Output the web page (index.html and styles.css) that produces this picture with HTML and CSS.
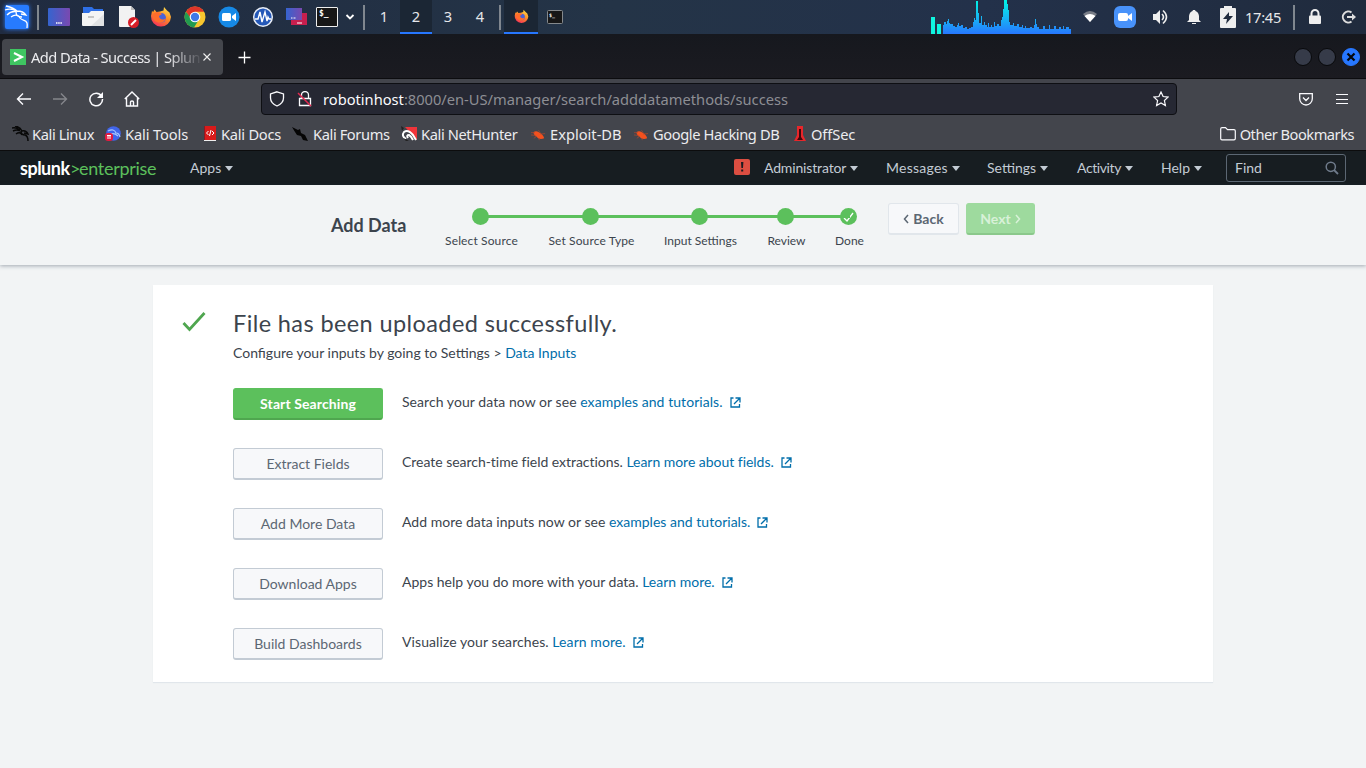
FILE: index.html
```
<!DOCTYPE html>
<html lang="en">
<head>
<meta charset="utf-8">
<title>Add Data - Success | Splunk</title>
<link rel="stylesheet" href="styles.css">
</head>
<body>
<svg class="defs" width="0" height="0">
  <defs>
    <linearGradient id="desk" x1="0" x2="1"><stop offset="0" stop-color="#3564cf"/><stop offset="1" stop-color="#7a49b0"/></linearGradient>
    <linearGradient id="cpu" gradientUnits="userSpaceOnUse" x1="0" y1="0" x2="0" y2="34"><stop offset="0" stop-color="#00f5e4"/><stop offset=".5" stop-color="#16b8f2"/><stop offset="1" stop-color="#2777ff"/></linearGradient>
    <linearGradient id="fire" x1=".8" y1="0" x2=".3" y2="1"><stop offset="0" stop-color="#ffe14a"/><stop offset=".5" stop-color="#ff8a26"/><stop offset="1" stop-color="#f4305a"/></linearGradient>
    <symbol id="firefox" viewBox="0 0 22 22"><path d="M2 5 3.200 6 4.500 3.500 6.500 6 10 5.500 13.500 4.500 14 1 17 4.500 19.500 6.500 21 11A10 10 0 1 1 1 10z" fill="url(#fire)"/><circle cx="11.200" cy="11.800" r="4.800" fill="#4b63d8"/><path d="M3 8c3-3 7-2 9 0l-3 2c0 3 4 5 7 2-1 4-5 6-9 4-3-1-5-4-4-8z" fill="#ff6d2c"/></symbol>
    <symbol id="bug" viewBox="0 0 16 16"><path d="M2.500 5.500C5 3.500 8 4.500 10.500 7c2 1.500 3 3 3.500 5-3 1.500-6 1-8-1.500C4 9.500 3 8 2.500 5.500z" fill="#f4511e"/><path d="m0 8.500 5 .5M3 12l3-2M8 3.500l2 3M10 7.500l5-.5M8 12l1 2M0 6h4" stroke="#a8452f" stroke-width=".8" fill="none"/></symbol>
    <symbol id="ext" viewBox="0 0 11 11"><path d="M3.500 1H1v9h8.500V7M5.500 1H10v4.500M4 7l5.500-5.500" fill="none" stroke="currentColor" stroke-width="1.300"/></symbol>
  </defs>
</svg>

<header class="panel">
  <div class="slot menu"><svg width="34" height="34" viewBox="0 0 34 34"><rect class="glow" x="5" y="5" width="24" height="24" rx="2"/><g fill="none" stroke="#fff" stroke-width="1.300"><path d="M6 6c4 1 8 2 11 5M5 10c5-2 8-1 12 1M7 15c3-3 7-4 10-3M11 17c4-3 8-2 9 1 2 3 6 1 7 5q.5 2 0 5M17 11c4 0 7 1 9 4l-5-1M16 12c0 4 3 5 6 5"/></g></svg></div>
  <i class="sep first"></i>
  <div class="slot"><svg width="22" height="18"><rect width="22" height="18" rx="1" fill="url(#desk)"/><path d="M8 15h6" stroke="#fff" stroke-width="1.300" stroke-dasharray="1.500 .7"/></svg></div>
  <div class="slot"><svg width="22" height="20"><path d="M1 0h9l2 2h9v5H1z" fill="#2e6fe6"/><path d="M0 6h7l2-2h13v14q0 1-1 1H1q-1 0-1-1z" fill="#f4f4f4"/><path d="m9 19 13-12v11q0 1-1 1z" fill="#e1e2e3"/><path d="M6 10h6" stroke="#999"/></svg></div>
  <div class="slot doc"><svg width="20" height="22"><path d="M0 0h12l4 4v16q0 1-1 1H1q-1 0-1-1z" fill="#f2f2f2"/><path d="M12 0v4h4z" fill="#bbb"/><circle cx="14.500" cy="16.500" r="5.500" fill="#d71e28"/><path d="m12 19 5-5" stroke="#fff" stroke-width="2"/></svg></div>
  <div class="slot"><svg width="22" height="22"><use href="#firefox"/></svg></div>
  <div class="slot"><svg width="22" height="22" viewBox="0 0 22 22"><circle cx="11" cy="11" r="10.500" fill="#f8c62e"/><path d="M1.900 5.800a10.500 10.500 0 0 1 18.200 0H11L7 13z" fill="#de3529"/><path d="M1.900 5.800A10.500 10.500 0 0 0 10 21.500l5-8-7 0z" fill="#219b50"/><circle cx="11" cy="11" r="5.300" fill="#fff"/><circle cx="11" cy="11" r="4.200" fill="#3d79e8"/></svg></div>
  <div class="slot"><svg width="22" height="22"><circle cx="11" cy="11" r="10.500" fill="#1689e6"/><rect x="4" y="7" width="9" height="8" rx="1.500" fill="#fff"/><path d="m14 10 4-3v8l-4-3z" fill="#fff"/></svg></div>
  <div class="slot"><svg width="22" height="22"><circle cx="11" cy="11" r="9.300" fill="#2458b8" stroke="#e8edf6" stroke-width="1.500"/><path d="M3 13h3l2-7 2 10 3-10 2 9 1-4 1 2h2" fill="none" stroke="#fff" stroke-width="1.400"/></svg></div>
  <div class="slot"><svg width="22" height="18"><rect x="5" y="5" width="16" height="12" fill="#c81f4e"/><rect width="16" height="12" fill="url(#desk)"/><path d="M5 10h5" stroke="#fff" stroke-dasharray="1 .5"/><path d="M11 15h5" stroke="#fff"/></svg></div>
  <div class="slot term"><svg width="22" height="20"><rect x=".5" y=".5" width="21" height="19" rx=".5" fill="#171717" stroke="#eee"/><text x="3" y="9" class="prompt">$_</text></svg></div>
  <div class="slot chev"><svg width="10" height="6"><path d="m1.500 1 3.500 3.500L8.500 1" fill="none" stroke="#fff" stroke-width="1.800"/></svg></div>
  <i class="sep second"></i>
  <nav class="spaces"><span>1</span><span class="on">2</span><span>3</span><span>4</span></nav>
  <i class="sep third"></i>
  <div class="slot on"><svg width="15" height="15"><use href="#firefox"/></svg></div>
  <div class="slot"><svg width="16" height="14"><rect x=".5" y=".5" width="15" height="13" rx="1" fill="#171717" stroke="#85898c"/><text x="2" y="7" class="prompt small">$_</text></svg></div>
  <svg class="graph" width="140" height="34"><path d="M0 17h4v17H0zM6 24h4v10H6z" fill="#0ff5df"/><path d="M12 34V25h1v-3h2v2h1v-3h1v-2h1v4h1v1h3v2h2v1h2v-2h1v-2h1v3h2v-1h2v3h2v-1h2v2h2v-1h2v-1h2v-5h1v-4h1v2h1V1h2v12h1v10h2v-7h1v9h2v-3h1v3h2v2h1v-4h1v4h2v-2h1v2h2v-5h1v4h2v-2h2v2h2v-6h1v-3h1v-8h1V0h3v4h1v6h1v12h1v3h3v-2h1v3h3v-2h2v3h3v-2h1v3h2v-2h1v2h4v-1h2v1h2v-3h1v-6h1v5h1v3h2v2h4v-3h2v3h4v-4h1v4h4v-3h2v3h3v-2h2v2h2v-3h1v3h2v-2h3v2h2v-4h2v4h1v2h3v-6h1v3h1v-8h2v15z" fill="url(#cpu)"/></svg>
  <div class="tray">
    <svg width="16" height="14"><path d="M1 4q7-6 14 0l-7 8z" fill="#777c86"/><path d="M2.500 6q5.500-4 11 0L8 12z" fill="#fff"/></svg>
    <svg width="22" height="22"><rect width="22" height="22" rx="6" fill="#4892fa"/><rect x="4" y="7" width="10" height="8" rx="2" fill="#fff"/><path d="m14 10 4-3v8l-4-3z" fill="#fff"/></svg>
    <svg width="16" height="16"><path d="M1 5h3l4-4v14l-4-4H1z" fill="#eee"/><path d="M10 5q3 3 0 6M11 1.500q7 6.500 0 13" fill="none" stroke="#eee" stroke-width="1.600"/></svg>
    <svg width="16" height="16"><path d="M7 1h2l.5 1q3 1 3.500 5v4l2 2H1l2-2V7q.5-4 3.500-5zM6 14h4v1H6z" fill="#eee"/></svg>
    <svg width="16" height="22"><path d="M4 0h8v2h3q1 0 1 1v18q0 1-1 1H1q-1 0-1-1V3q0-1 1-1h3z" fill="#eee"/><path d="m9 6-6 7h4l-1 5 7-8H9z" fill="#202b3d"/></svg>
  </div>
  <time class="clock">17:45</time>
  <i class="sep fourth"></i>
  <div class="slot lock"><svg width="14" height="16"><path d="M3.500 7V4.500a3.500 3.500 0 0 1 7 0V7" fill="none" stroke="#eee" stroke-width="2"/><rect x="1" y="6.500" width="12" height="8.500" rx="1" fill="#eee"/></svg></div>
  <div class="slot"><svg width="16" height="16"><path d="M10.500 3.500A5.500 5.500 0 1 0 10.500 12.500M6 8h6" fill="none" stroke="#ddd" stroke-width="2"/><path d="m11 4.500 4 3.500-4 3.500z" fill="#ddd"/></svg></div>
</header>

<section class="tabs">
  <div class="tab">
    <svg class="fav" width="16" height="16"><rect width="16" height="16" fill="#3fc561"/><path d="m4 4 8 4-8 4" fill="none" stroke="#fff" stroke-width="2"/></svg>
    <span class="title">Add Data - Success | Splun</span>
    <svg class="x" width="10" height="10"><path d="m1.500 1.500 7 7m0-7-7 7" stroke="#eee" stroke-width="1.100"/></svg>
  </div>
  <svg class="plus" width="13" height="13"><path d="M6.500.5v12M.5 6.500h12" stroke="#fff" stroke-width="1.300"/></svg>
  <div class="wm"><i></i><i></i><i class="close"><svg width="10" height="10"><path d="m1.500 1.500 7 7m0-7-7 7" stroke="#05080e" stroke-width="2.200"/></svg></i></div>
</section>

<section class="toolbar">
  <div class="navs">
    <svg width="16" height="16"><path d="M15 8H1.500M7 2.500 1.500 8 7 13.500" fill="none" stroke="#fbfbfe" stroke-width="1.400"/></svg>
    <svg width="16" height="16"><path d="M1 8h13.500M9 2.500 14.500 8 9 13.500" fill="none" stroke="#85868b" stroke-width="1.400"/></svg>
    <svg width="16" height="16"><path d="M13.500 5A6.300 6.300 0 1 0 14.500 8" fill="none" stroke="#fbfbfe" stroke-width="1.500"/><path d="M15 1v6H9z" fill="#fbfbfe"/></svg>
    <svg width="16" height="16"><path d="m.8 8 7.200-7 7.200 7M2.500 7v8h11V7M6.500 15v-4q0-1 1.500-1t1.500 1v4" fill="none" stroke="#fbfbfe" stroke-width="1.400"/></svg>
  </div>
  <div class="url">
    <svg class="shield" width="16" height="16"><path d="M8 .8 14.500 3v4q0 5-6.500 8Q1.500 12 1.500 7V3z" fill="none" stroke="#fbfbfe" stroke-width="1.300"/></svg>
    <svg class="nolock" width="16" height="16"><path d="M4.500 7V4a3.500 3.500 0 0 1 7 0v3M2.500 7.500h11v7h-11z" fill="none" stroke="#fbfbfe" stroke-width="1.300"/><path d="m1 2 13 13" stroke="#e22850" stroke-width="1.500"/></svg>
    <span class="addr">robotinhost<em>:8000/en-US/manager/search/adddatamethods/success</em></span>
    <svg width="16" height="16"><path d="m8 1 2.100 4.500 5 .6-3.700 3.400 1 5L8 12l-4.400 2.500 1-5L.9 6.100l5-.6z" fill="none" stroke="#fbfbfe" stroke-width="1.200"/></svg>
  </div>
  <svg class="pocket" width="14" height="13"><path d="M.7.7h12.600v5a6.300 6.300 0 0 1-12.600 0zM4 4.500l3 3 3-3" fill="none" stroke="#fbfbfe" stroke-width="1.300"/></svg>
  <svg class="burger" width="12" height="12"><path d="M0 1.500h12M0 6.500h12M0 10.500h12" stroke="#fbfbfe"/></svg>
</section>

<nav class="bookmarks">
  <a class="k1"><svg class="black" width="17" height="16"><path d="M0 2q4-1 8 2M1 5q4-2 7 0M3 0q5 1 7 5 4-1 6 3l-4-1M9 5q0 4 4 4 3 1 3 6M4 8q4-3 6 1" fill="none" stroke="#080808" stroke-width="1.500"/></svg>Kali Linux</a>
  <a class="k2"><svg width="16" height="16"><circle cx="8.500" cy="7.500" r="7.300" fill="#4165ea"/><path d="M3 5q6-3 8 2 3 0 4 4M5 9q3-3 8 1" fill="none" stroke="#a9c9ff" stroke-width="1.200"/><rect y="7" width="8" height="8" rx="3" fill="#e31b3f"/><path d="M2 9.500h4M3 9v4M5 9v4" stroke="#fff"/></svg>Kali Tools</a>
  <a class="k3"><svg width="14" height="16"><rect x="1" width="12" height="15" fill="#d91a1a"/><path d="M1 14.500h12" stroke="#eee"/><path d="M1.500 0v14" stroke="#841d27"/><path d="M5.500 5 3.500 7l2 2M9 5l2 2-2 2M8 4 6.500 10" stroke="#fff" fill="none"/></svg>Kali Docs</a>
  <a class="k4"><svg width="17" height="16"><path d="m0 1 6 3 2-1 1 4 4 2 3 6-5-1-2-4-4-1-2-3z" fill="#050505"/></svg>Kali Forums</a>
  <a class="k5"><svg width="16" height="16"><path d="M4 1h12v13z" fill="#f0343a"/><path d="M5 13q-5-3-2-7 4-3 9 3l3 5M7 12q-2-3 1-3 2 1 4 5" fill="none" stroke="#fff" stroke-width="2"/><path d="M1 5 0 0l3 2M5 15l-3-3q3 1 6 3z" fill="#222"/></svg>Kali NetHunter</a>
  <a class="k6"><svg width="15" height="15"><use href="#bug"/></svg>Exploit-DB</a>
  <a class="k7"><svg width="15" height="15"><use href="#bug"/></svg>Google Hacking DB</a>
  <a class="k8"><svg width="14" height="16"><path d="M4 0h6v9l3 6H1l3-6z" fill="#e7262a"/><path d="M6 3h2v8l2 3H4l2-3z" fill="#3d090c"/></svg>OffSec</a>
  <a class="other"><svg width="16" height="14"><path d="M.7 2q0-1.300 1.300-1.300h3.500l2 2H14q1.300 0 1.300 1.300v7.500q0 1.300-1.300 1.300H2q-1.300 0-1.300-1.300z" fill="none" stroke="#fbfbfe" stroke-width="1.200"/></svg>Other Bookmarks</a>
</nav>

<nav class="splunkbar">
  <div class="logo"><span class="spl">splunk</span><span class="gt">&gt;</span><span class="ent">enterprise</span></div>
  <a class="apps">Apps<i class="caret"></i></a>
  <span class="alert"><svg width="16" height="16"><rect width="16" height="16" rx="2" fill="#dc4e41"/><path d="M7 3h2.400L9 9H7.400zM7.200 10.500h2v2h-2z" fill="#1a1c20"/></svg></span>
  <a class="admin">Administrator<i class="caret"></i></a>
  <a class="msgs">Messages<i class="caret"></i></a>
  <a class="sets">Settings<i class="caret"></i></a>
  <a class="act">Activity<i class="caret"></i></a>
  <a class="help">Help<i class="caret"></i></a>
  <div class="find">Find<svg width="14" height="14"><circle cx="5.800" cy="5.800" r="4.600" fill="none" stroke="#6f7b8b" stroke-width="1.500"/><path d="m9 9 4 4" stroke="#6f7b8b" stroke-width="1.800"/></svg></div>
</nav>

<section class="wizard">
  <h1>Add Data</h1>
  <ol class="steps">
    <li class="s1"><i class="dot"></i><span>Select Source</span></li>
    <li class="s2"><i class="dot"></i><span>Set Source Type</span></li>
    <li class="s3"><i class="dot"></i><span>Input Settings</span></li>
    <li class="s4"><i class="dot"></i><span>Review</span></li>
    <li class="s5"><i class="dot"><svg width="17" height="17"><path d="m4 10 3 3 6-8" fill="none" stroke="#fff" stroke-width="1.300"/></svg></i><span>Done</span></li>
  </ol>
  <button class="btn back"><svg width="6" height="10"><path d="M5 1 1.500 5 5 9" fill="none" stroke="#5c6773" stroke-width="1.500"/></svg>Back</button>
  <button class="btn next">Next<svg width="6" height="10"><path d="m1 1 3.500 4L1 9" fill="none" stroke="#d8f1d8" stroke-width="1.500"/></svg></button>
</section>

<main class="card">
  <svg class="tick" width="24" height="20"><path d="m1.500 11 6 6.500L22.500 1" fill="none" stroke="#4fa64f" stroke-width="2.800"/></svg>
  <div class="body">
    <h2>File has been uploaded successfully.</h2>
    <p class="sub">Configure your inputs by going to Settings &gt; <a>Data Inputs</a></p>
    <div class="row"><button class="btn go">Start Searching</button><p><span class="r1">Search your data now or see <a>examples and tutorials.</a></span><svg width="11" height="11"><use href="#ext"/></svg></p></div>
    <div class="row"><button class="btn">Extract Fields</button><p><span class="r2">Create search-time field extractions. <a>Learn more about fields.</a></span><svg width="11" height="11"><use href="#ext"/></svg></p></div>
    <div class="row"><button class="btn">Add More Data</button><p><span class="r3">Add more data inputs now or see <a>examples and tutorials.</a></span><svg width="11" height="11"><use href="#ext"/></svg></p></div>
    <div class="row"><button class="btn">Download Apps</button><p><span>Apps help you do more with your data. <a>Learn more.</a></span><svg width="11" height="11"><use href="#ext"/></svg></p></div>
    <div class="row"><button class="btn">Build Dashboards</button><p><span class="r5">Visualize your searches. <a>Learn more.</a></span><svg width="11" height="11"><use href="#ext"/></svg></p></div>
  </div>
</main>
</body>
</html>
```
FILE: styles.css
```
* { box-sizing: border-box; }
html, body { height: 100%; }
body {
  margin: 0;
  overflow: hidden;
  background: #f2f4f5;
  color: #3c444d;
  font: 14px/20px Lato, "Open Sans", sans-serif;
}
svg { display: block; flex: none; }
.defs { position: absolute; }
h1, h2, p, ol { margin: 0; padding: 0; }

/* desktop panel */
.panel {
  display: flex;
  align-items: center;
  height: 34px;
  background: linear-gradient(90deg, #202b40 0, #243447 45%, #23314a 72%, #202b3d 100%);
  color: #e6e7ea;
  font: 14.667px/33px "Noto Sans", sans-serif;
}
.slot { display: flex; align-items: center; justify-content: center; flex: none; width: 34px; height: 34px; }
.menu .glow { fill: #277bff; filter: drop-shadow(0 0 2px #2a7bff); }
.doc { padding-left: 3px; }
.sep { flex: none; width: 2px; height: 25px; background: #80878f; }
.first { margin: 0 3px; }
.term { width: 26px; }
.chev { width: 20px; }
.prompt { font: bold 8px "DejaVu Sans Mono", monospace; fill: #fff; }
.prompt.small { font-size: 5px; }
.second { margin: 0 3px; }
.third { margin: 0 3px; }
.spaces { display: flex; }
.spaces span { width: 32px; height: 34px; text-align: center; }
.on { background: #1b2634; border-bottom: 2px solid #2777ff; }
.graph { margin-left: 359px; }
.tray { display: flex; align-items: center; margin-left: 2px; }
.tray svg { margin-left: 9px; }
.tray svg + svg { margin-left: 16px; }
.tray svg:nth-child(4) { margin-left: 18px; }
.tray svg:nth-child(5) { margin-left: 18px; }
.clock { width: 48px; margin-left: 9px; letter-spacing: -.3px; }
.fourth { margin-right: 3px; }

/* browser tabs */
.tabs {
  display: flex;
  align-items: center;
  height: 45px;
  padding-left: 2px;
  border-bottom: 1px solid #0c0c0f;
  background: linear-gradient(#16181e, #1b1b21);
  color: #ececef;
  font: 14.667px/20px "Noto Sans", sans-serif;
}
.tab {
  display: flex;
  align-items: center;
  width: 221px;
  height: 36px;
  margin-top: 1px;
  padding-left: 8px;
  border-radius: 4px;
  background: #44464c;
}
.title {
  width: 170px;
  margin: 0 1px 0 5px;
  letter-spacing: -.58px;
  white-space: nowrap;
  -webkit-mask-image: linear-gradient(90deg, #000 136px, transparent 172px);
  mask-image: linear-gradient(90deg, #000 136px, transparent 172px);
}
.plus { margin: 2px 0 0 15px; }
.wm { display: flex; gap: 6px; margin: 1px 0 0 auto; padding-right: 6px; }
.wm i { display: flex; align-items: center; justify-content: center; width: 18px; height: 18px; border: 1px solid #08090b; border-radius: 50%; background: #363b49; }
.wm .close { border-color: #2777ff; background: #2777ff; }

/* navigation row */
.toolbar {
  display: flex;
  align-items: center;
  height: 40px;
  padding: 0 18px 0 16px;
  background: #43454c;
  color: #fbfbfe;
  font: 14.667px/20px "Noto Sans", sans-serif;
}
.navs { display: flex; gap: 20px; width: 245px; }
.url {
  display: flex;
  align-items: center;
  width: 916px;
  height: 32px;
  padding: 0 7px;
  border: 1px solid #0e0f13;
  border-radius: 4px;
  background: #262833;
}
.nolock { margin: 0 10px 0 12px; }
.addr { flex: 1; }
.addr em { color: #8d8e94; font-style: normal; }
.pocket { margin-left: 122px; }
.burger { margin-left: 23px; }

/* bookmarks */
.bookmarks {
  display: flex;
  align-items: center;
  height: 32px;
  padding: 0 12px 1px;
  border-bottom: 1px solid #0c0c0d;
  background: #43454c;
  color: #ececef;
  font: 14.667px/20px "Noto Sans", sans-serif;
  letter-spacing: -.4px;
}
.bookmarks a { display: flex; align-items: center; flex: none; white-space: nowrap; }
.bookmarks svg { margin-right: 4px; }
.bookmarks .black { margin-right: 3px; }
.k1 { width: 93px; }
.k2 { width: 98px; letter-spacing: -.13px; }
.k3 { width: 89px; letter-spacing: -.25px; }
.k4 { width: 109px; }
.k5 { width: 130px; }
.k6 { width: 103px; letter-spacing: 0; }
.k7 { width: 159px; }
.k8 { letter-spacing: -.1px; }
.bookmarks .other { margin-left: auto; letter-spacing: -.5px; }

/* application bar */
.splunkbar {
  display: flex;
  align-items: center;
  height: 34px;
  padding: 0 20px;
  background: #171d21;
  color: #c3cbd4;
}
.splunkbar a { display: flex; align-items: center; flex: none; }
.splunkbar .caret { margin-left: 4px; border: 4px solid transparent; border-top: 5px solid #c3cbd4; border-bottom: 0; }
.logo { display: flex; width: 170px; font-size: 18px; line-height: 24px; }
.spl { width: 50px; color: #fff; font-weight: 700; letter-spacing: -.5px; }
.gt, .ent { color: #5cc05c; }
.gt { width: 9px; letter-spacing: -1px; }
.ent { letter-spacing: -.3px; }
.apps { width: 544px; }
.alert { width: 30px; padding-bottom: 2px; }
.admin { width: 122px; letter-spacing: -.15px; }
.msgs { width: 101px; letter-spacing: .25px; }
.sets { width: 90px; }
.act { width: 84px; letter-spacing: -.4px; }
.help { width: 65px; }
.find { display: flex; align-items: center; justify-content: space-between; width: 120px; height: 28px; padding: 0 6px 0 8px; border: 1px solid #5c6773; border-radius: 3px; }

/* wizard header */
.wizard {
  display: flex;
  height: 80px;
  padding-left: 331px;
  background: #f2f4f5;
  box-shadow: 0 1px 4px rgba(40, 55, 75, .4);
}
.wizard h1 { width: 114px; padding-top: 30px; font-size: 18px; line-height: 20px; font-weight: 700; }
.steps { display: flex; width: 443px; padding-top: 23px; list-style: none; font-size: 12px; }
.steps li { position: relative; display: flex; flex-direction: column; align-items: center; gap: 6px; line-height: 20px; white-space: nowrap; }
.steps li + li::before { content: ""; position: absolute; top: 7px; right: 50%; height: 3px; background: #5cc05c; }
.s1 { width: 73px; letter-spacing: .13px; }
.s2 { width: 87px; margin-left: 30px; letter-spacing: .13px; }
.s3 { width: 73px; margin-left: 29px; }
.s4 { width: 39px; margin-left: 30px; }
.s5 { width: 29px; margin-left: 29px; }
.s2::before { width: 110px; }
.s3::before { width: 109px; }
.s4::before { width: 86px; }
.s5::before { width: 63px; }
.dot { width: 17px; height: 17px; margin-left: -2px; border-radius: 50%; background: #5cc05c; }

/* buttons */
.btn {
  display: flex;
  align-items: center;
  justify-content: center;
  width: 150px;
  height: 32px;
  padding: 0;
  border: 1px solid #c3cbd4;
  border-bottom-width: 2px;
  border-radius: 3px;
  background: #f7f8fa;
  color: #5c6773;
  font: inherit;
}
.back { gap: 4px; width: 71px; margin-top: 18px; border-color: #e1e6eb; font-weight: 700; }
.next { gap: 4px; width: 69px; margin: 18px 0 0 7px; border-color: #9eda9e; border-bottom-color: #8bc88b; background: #9eda9e; color: #d8f1d8; font-weight: 700; }
.go { border-color: #5cc05c; border-bottom-color: #4fa64f; background: #5cc05c; color: #fff; font-weight: 700; letter-spacing: .1px; }

/* result card */
.card {
  display: flex;
  width: 1060px;
  height: 397px;
  margin: 20px 0 0 153px;
  padding: 24px 0 0 29px;
  background: #fff;
  box-shadow: 0 1px 1px #e1e6eb;
}
.tick { margin-top: 3px; }
.body { padding-left: 27px; }
.card h2 { font-size: 23.5px; line-height: 28px; font-weight: 400; letter-spacing: .4px; }
.sub { margin-top: 6px; }
.card a { color: #006eaa; }
.row { display: flex; height: 32px; margin-top: 28px; }
.sub + .row { margin-top: 25px; }
.row p { display: flex; padding-left: 19px; line-height: 28px; }
.row p svg { margin: 9px 0 0 7px; color: #006eaa; }
.r1 { letter-spacing: .06px; }
.r2 { letter-spacing: -.03px; }
.r3 { letter-spacing: .02px; }
.r5 { letter-spacing: .08px; }
```
